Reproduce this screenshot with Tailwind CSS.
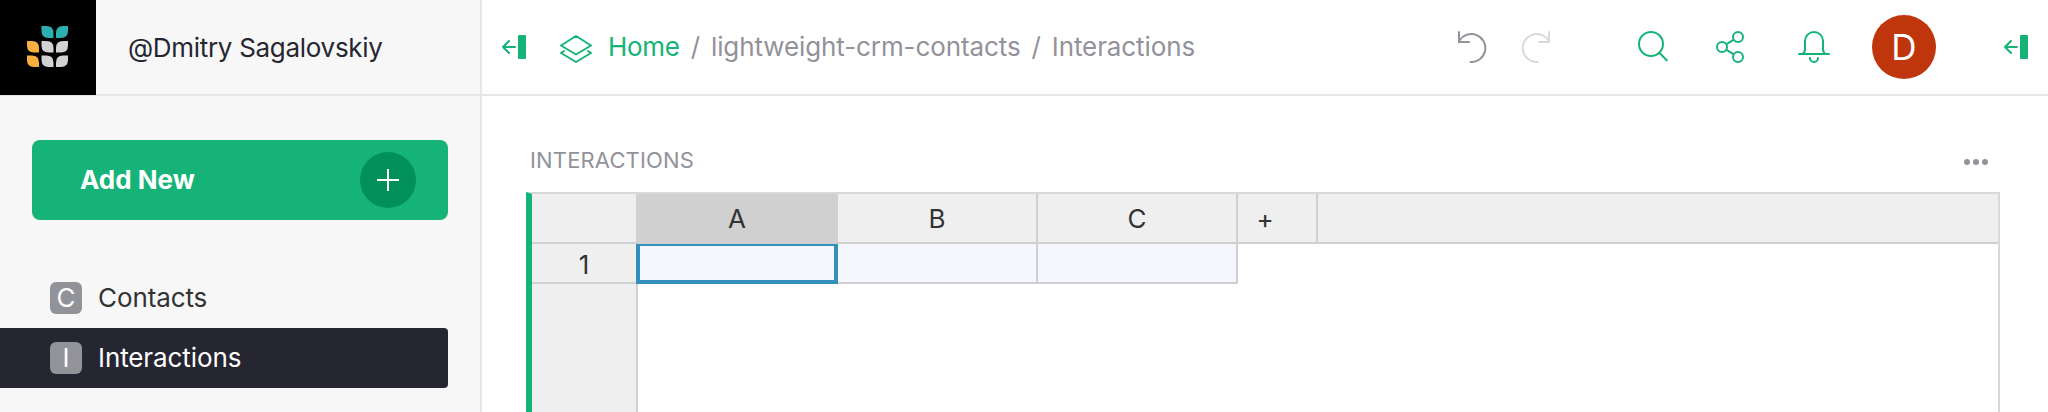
<!DOCTYPE html>
<html lang="en">
<head>
<meta charset="utf-8">
<title>Interactions</title>
<script src="https://cdn.jsdelivr.net/npm/@tailwindcss/browser@4"></script>
</head>
<body class="flex h-[412px] w-[2048px] overflow-hidden bg-white font-[Inter,sans-serif] text-[26px] leading-8 text-[#262633]">

<!-- Left panel -->
<aside class="flex w-[482px] shrink-0 flex-col border-r-2 border-[#e6e6e6] bg-[#f7f7f7]">
  <div class="flex h-24 border-b-2 border-[#e6e6e6]">
    <div class="-mb-px flex h-[95px] w-24 items-start bg-black pt-[26px] pl-[27px]">
      <svg width="41" height="41" viewBox="0 0 41 41">
        <g fill="#2cb0af"><path d="M14.500 0h5q7 0 7 7v5h-5q-7 0-7-7z"/><path d="M41 0h-5q-7 0-7 7v5h5q7 0 7-7z"/></g>
        <g fill="#f9ae41"><path d="M0 15h5q7 0 7 7v4.500h-5q-7 0-7-7z"/><path d="M0 29.500h5q7 0 7 7v4.500h-5q-7 0-7-7z"/></g>
        <g fill="#d2d2d2"><path d="M14.500 15h5q7 0 7 7v4.500h-5q-7 0-7-7z"/><path d="M14.500 29.500h5q7 0 7 7v4.500h-5q-7 0-7-7z"/><path d="M41 15h-5q-7 0-7 7v4.500h5q7 0 7-7z"/><path d="M41 29.500h-5q-7 0-7 7v4.500h5q7 0 7-7z"/></g>
      </svg>
    </div>
    <div class="pt-[32px] pl-8 tracking-[-0.3px] whitespace-nowrap">@Dmitry Sagalovskiy</div>
  </div>
  <button class="mt-11 ml-8 flex h-20 w-[416px] items-center justify-between rounded-lg bg-[#16b378] pr-8 pl-12 font-bold text-white">
    <span>Add New</span>
    <span class="flex size-14 items-center justify-center rounded-full bg-[#009058]">
      <svg width="22" height="22" viewBox="0 0 22 22" stroke="#fff" stroke-width="2"><path d="M11 0v22M0 11h22"/></svg>
    </span>
  </button>
  <nav class="mt-12 w-[448px] tracking-[-0.1px]">
    <div class="flex h-[60px] items-center gap-4 pl-[50px] text-[#333]">
      <span class="flex size-8 items-center justify-center rounded-md bg-[#929299] text-white">C</span>
      <span>Contacts</span>
    </div>
    <div class="flex h-[60px] items-center gap-4 rounded-r bg-[#262633] pl-[50px] text-white">
      <span class="flex size-8 items-center justify-center rounded-md bg-[#929299]">I</span>
      <span>Interactions</span>
    </div>
  </nav>
</aside>

<main class="flex min-w-0 flex-1 flex-col">
  <!-- Top bar -->
  <header class="flex h-24 items-center border-b-2 border-[#e6e6e6] pr-5 pl-5 text-[#929299]">
    <svg width="24" height="24" viewBox="0 0 24 24" fill="none" stroke="#16b378" stroke-width="2" stroke-linecap="round" stroke-linejoin="round"><path d="M1 12h12M7 6l-6 6 6 6"/><rect x="16" y="0" width="8" height="24" rx="1" fill="#16b378" stroke="none"/></svg>
    <svg class="ml-[34px]" width="32" height="32" viewBox="0 0 32 32" fill="none" stroke="#16b378" stroke-width="2" stroke-linecap="round" stroke-linejoin="round"><path d="M16 5l15 9.500-15 9L1 14.500zM4 20l-3 2 15 9 15-9-3-2"/></svg>
    <div class="ml-4 flex tracking-[-0.1px] whitespace-nowrap">
      <span class="tracking-[-0.3px] text-[#16b378]">Home</span><span class="mx-[11px]">/</span><span>lightweight-crm-contacts</span><span class="mx-[11px]">/</span><span>Interactions</span>
    </div>
    <div class="ml-auto flex items-center">
      <svg class="mr-8" width="32" height="32" viewBox="0 0 32 32" fill="none" stroke="#929299" stroke-width="2" stroke-linecap="round"><path d="M3 1v10h10M3.500 9.500A14 14 0 1 1 14.500 31" /></svg>
      <svg class="mr-[84px]" width="32" height="32" viewBox="0 0 32 32" fill="none" stroke="#d9d9d9" stroke-width="2" stroke-linecap="round"><path d="M29 1v10H19M28.500 9.500A14 14 0 1 0 17.500 31"/></svg>
      <svg class="mr-[46px]" width="32" height="32" viewBox="0 0 32 32" fill="none" stroke="#16b378" stroke-width="2" stroke-linecap="round"><circle cx="15" cy="13" r="12"/><path d="M23.500 22l7.300 7.300"/></svg>
      <svg class="mr-[52px]" width="32" height="32" viewBox="0 0 32 32" fill="none" stroke="#16b378" stroke-width="2"><circle cx="8" cy="16" r="5"/><circle cx="24" cy="6" r="5"/><circle cx="24" cy="26" r="5"/><path d="M12.500 13.200l7-4.400M12.500 18.800l7 4.400"/></svg>
      <svg class="mr-[42px]" width="32" height="32" viewBox="0 0 32 32" fill="none" stroke="#16b378" stroke-width="2" stroke-linecap="round"><path d="M1 23h30M4 23q3-1 3-5v-8a9 9 0 0 1 18 0v8q0 4 3 5M12 27a4 4 0 0 0 8 0"/></svg>
      <div class="mr-[68px] flex size-16 items-center justify-center rounded-full bg-[#bf360c] text-[35px] text-white">D</div>
      <svg width="24" height="24" viewBox="0 0 24 24" fill="none" stroke="#16b378" stroke-width="2" stroke-linecap="round" stroke-linejoin="round"><path d="M1 12h12M7 6l-6 6 6 6"/><rect x="16" y="0" width="8" height="24" rx="1" fill="#16b378" stroke="none"/></svg>
    </div>
  </header>

  <!-- Section title -->
  <div class="flex h-24 items-center justify-between pt-9 pr-[60px] pl-12 text-[22px] text-[#929299]">
    <span class="-mt-1 tracking-[0.15px]">INTERACTIONS</span>
    <svg width="24" height="6" viewBox="0 0 24 6" fill="#929299"><circle cx="3" cy="3" r="3"/><circle cx="12" cy="3" r="3"/><circle cx="21" cy="3" r="3"/></svg>
  </div>

  <!-- Grid -->
  <section class="ml-11 flex w-[1474px] flex-1 flex-col border-t-2 border-r-2 border-l-6 border-t-[#d9d9d9] border-r-[#d9d9d9] border-l-[#16b378] text-[#333]">
    <div class="flex h-[50px] shrink-0 border-b-2 border-[#d0d0d0] bg-[#efefef] text-center leading-[50px]">
      <div class="w-[106px] border-r-2 border-[#d0d0d0]"></div>
      <div class="w-[200px] border-r-2 border-[#d0d0d0] bg-[#d0d0d0]">A</div>
      <div class="w-[200px] border-r-2 border-[#d0d0d0]">B</div>
      <div class="w-[200px] border-r-2 border-[#d0d0d0]">C</div>
      <div class="w-20 border-r-2 border-[#d0d0d0] pr-6">+</div>
    </div>
    <div class="flex flex-1">
      <div class="w-[106px] border-r-2 border-[#d0d0d0] bg-[#efefef]">
        <div class="h-10 border-b-2 border-[#d0d0d0] text-center leading-[42px]">1</div>
      </div>
      <div class="-ml-0.5 h-10 w-[202px] border-4 border-t-2 border-[#3390bd] bg-[#f6f6ff]"></div>
      <div class="h-10 w-[200px] border-r-2 border-b-2 border-[#d0d0d0] bg-[#f6f6ff]"></div>
      <div class="h-10 w-[200px] border-r-2 border-b-2 border-[#d0d0d0] bg-[#f6f6ff]"></div>
    </div>
  </section>
</main>
</body>
</html>
